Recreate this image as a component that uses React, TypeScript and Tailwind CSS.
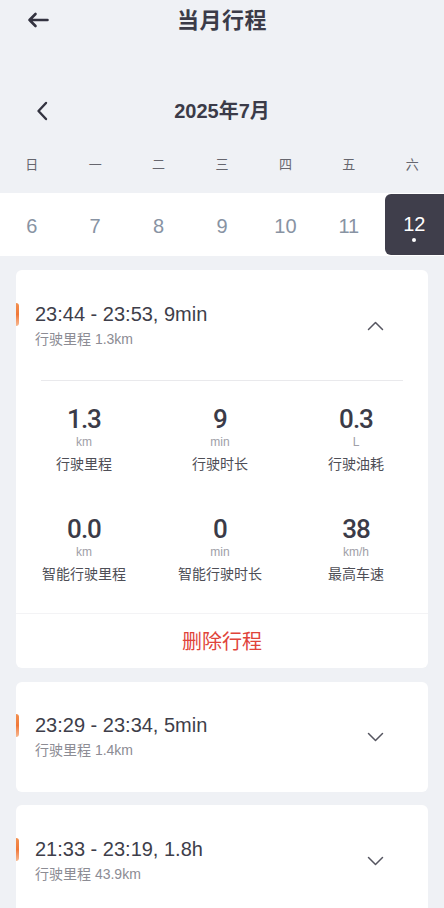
import React from 'react';

const weekdays = ['日', '一', '二', '三', '四', '五', '六'];
const days = [6, 7, 8, 9, 10, 11, 12];

const stats = [
    { value: '1.3', unit: 'km', label: '行驶里程' },
    { value: '9', unit: 'min', label: '行驶时长' },
    { value: '0.3', unit: 'L', label: '行驶油耗' },
    { value: '0.0', unit: 'km', label: '智能行驶里程' },
    { value: '0', unit: 'min', label: '智能行驶时长' },
    { value: '38', unit: 'km/h', label: '最高车速' },
];

const sans = 'font-["Liberation_Sans","Noto_Sans_CJK_SC",sans-serif]';

function Chevron({ up }: { up?: boolean }) {
    return (
        <svg width="17" height="10" viewBox="0 0 17 10" fill="none" className="mr-[44px]">
            <path
                d={up ? 'M1.5 8.5 L8.5 1.5 L15.5 8.5' : 'M1.5 1.5 L8.5 8.5 L15.5 1.5'}
                stroke="#555560"
                strokeWidth="1.5"
                strokeLinecap="round"
                strokeLinejoin="round"
            />
        </svg>
    );
}

function TripHeader({ time, distance, up }: { time: string; distance: string; up?: boolean }) {
    return (
        <div className="relative flex items-center justify-between pl-[19px]">
            {/* 左侧橙色标记 */}
            <div className="absolute left-0 top-[1px] h-[23px] w-[3px] rounded-r-sm bg-gradient-to-b from-[#f29050] via-[#f07838] to-[#f6b890]" />
            <div>
                <p className="text-[20px] leading-[24px] text-[#3e3e4a]">{time}</p>
                <p className="mt-[3px] text-[14px] leading-[20px] text-[#8c8c94]">行驶里程 {distance}</p>
            </div>
            <Chevron up={up} />
        </div>
    );
}

export default function App() {
    return (
        <div className={`min-h-[908px] w-[444px] overflow-hidden bg-[#eff1f5] ${sans}`}>
            {/* 顶部栏 */}
            <div className="grid h-[40px] grid-cols-[1fr_auto_1fr] items-center">
                <svg width="22" height="16" viewBox="0 0 22 16" fill="none" className="ml-[27px]">
                    <path d="M20.5 8 H2.5 M8.5 2 L2.5 8 L8.5 14" stroke="#333340" strokeWidth="2.6" strokeLinecap="round" strokeLinejoin="round" />
                </svg>
                <h1 className="text-[22px] font-bold tracking-[0.5px] text-[#3b3b48]">当月行程</h1>
                <div />
            </div>

            {/* 月份 */}
            <div className="mt-[51px] grid h-[40px] grid-cols-[1fr_auto_1fr] items-center">
                <svg width="12" height="20" viewBox="0 0 12 20" fill="none" className="ml-[36px]">
                    <path d="M10 2 L2.5 10 L10 18" stroke="#333340" strokeWidth="2.4" strokeLinecap="round" strokeLinejoin="round" />
                </svg>
                <h2 className="text-[20px] font-bold text-[#3b3b48]">2025年7月</h2>
                <div />
            </div>

            {/* 星期 */}
            <div className="grid h-[62px] grid-cols-7 items-center pt-[6px]">
                {weekdays.map((w) => (
                    <span key={w} className="text-center text-[13px] text-[#66666e]">{w}</span>
                ))}
            </div>

            {/* 日期 */}
            <div className="grid h-[63px] grid-cols-7 bg-white">
                {days.map((d) =>
                    d === 12 ? (
                        <div key={d} className="my-[1px] ml-[4px] flex flex-col items-center justify-center rounded-l-[6px] bg-[#3f3e4b] pt-[6px]">
                            <span className="text-[20px] leading-[22px] text-white">{d}</span>
                            <span className="mt-[3px] h-[4px] w-[4px] rounded-full bg-white" />
                        </div>
                    ) : (
                        <div key={d} className="flex items-center justify-center pt-[2px]">
                            <span className="text-[20px] text-[#8893a3]">{d}</span>
                        </div>
                    )
                )}
            </div>

            <div className="mx-[16px] mt-[14px] flex flex-col gap-[14px]">
                {/* 展开的行程 */}
                <div className="rounded-[6px] bg-white">
                    <div className="pt-[32px] pb-[31px]">
                        <TripHeader time="23:44 - 23:53, 9min" distance="1.3km" up />
                    </div>
                    <div className="mx-[25px] h-px bg-[#e9e9ec]" />
                    <div className="grid grid-cols-3 gap-y-[40px] pt-[23px] pb-[29px] pr-[4px]">
                        {stats.map((s) => (
                            <div key={s.label} className="flex flex-col items-center">
                                <span className='font-["Roboto",sans-serif] text-[26px] font-medium leading-[30px] tracking-[-1px] text-[#3b3b48]'>{s.value}</span>
                                <span className="text-[12px] leading-[16px] text-[#a0a0a8]">{s.unit}</span>
                                <span className="mt-[4px] text-[14px] leading-[20px] text-[#4e4e56]">{s.label}</span>
                            </div>
                        ))}
                    </div>
                    <div className="h-px bg-[#f3f3f5]" />
                    <div className="flex h-[54px] items-center justify-center pt-[2px]">
                        <span className="text-[20px] text-[#e0443a]">删除行程</span>
                    </div>
                </div>

                {/* 收起的行程 */}
                <div className="h-[110px] rounded-[6px] bg-white pt-[31px]">
                    <TripHeader time="23:29 - 23:34, 5min" distance="1.4km" />
                </div>

                <div className="-mt-[1px] h-[120px] rounded-[6px] bg-white pt-[32px]">
                    <TripHeader time="21:33 - 23:19, 1.8h" distance="43.9km" />
                </div>
            </div>
        </div>
    );
}
